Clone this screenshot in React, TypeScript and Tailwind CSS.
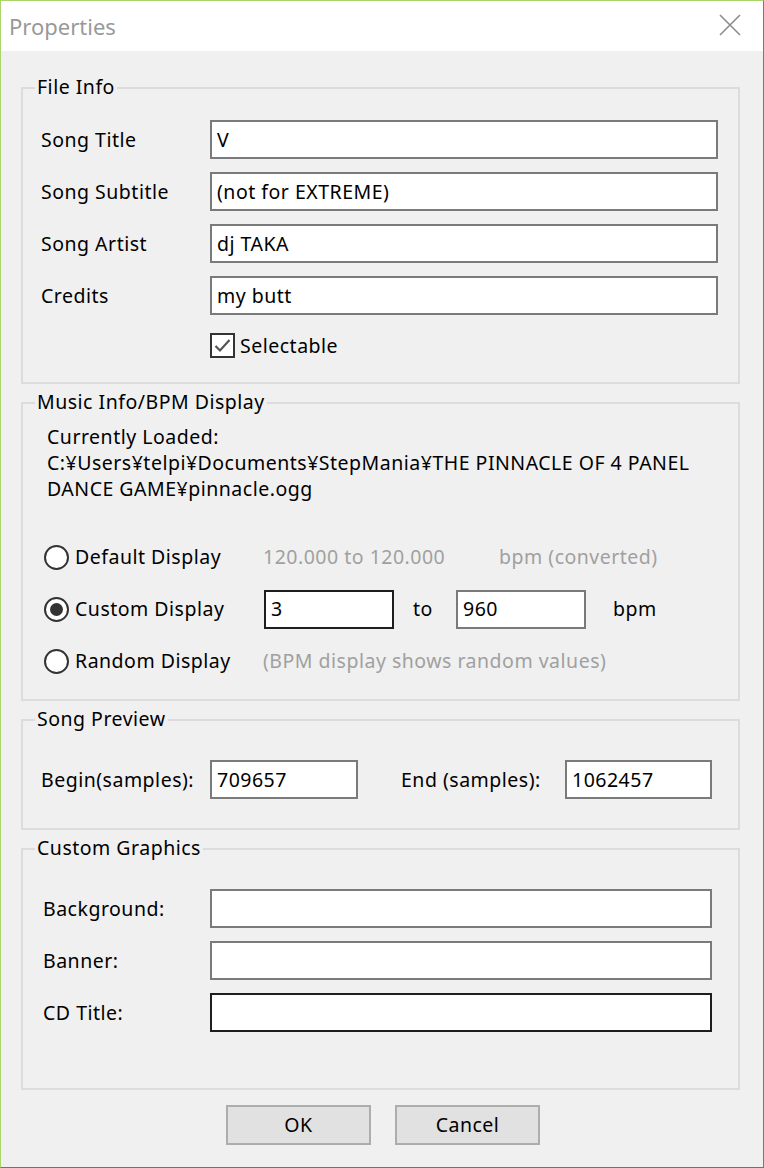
import React from "react";

const font = { fontFamily: '"Noto Sans", "Liberation Sans", sans-serif' };

function Group({ title, className, children }: { title: string; className?: string; children: React.ReactNode }) {
  return (
    <div className={"relative ml-[20px] w-[719px] border-2 border-[#dcdcdc] " + (className ?? "")}>
      <div className="absolute -top-[15px] left-[12px] bg-[#f0f0f0] px-[2px] text-[19.5px] leading-[26px] text-black">{title}</div>
      {children}
    </div>
  );
}

function TextBox({ value, className, dark }: { value?: string; className?: string; dark?: boolean }) {
  return (
    <div
      className={
        "flex h-[39px] items-center border-2 bg-white pl-[5px] text-[19.5px] text-black " +
        (dark ? "border-[#1e1e1e] " : "border-[#7a7a7a] ") +
        (className ?? "")
      }
    >
      {value}
    </div>
  );
}

function Radio({ checked }: { checked?: boolean }) {
  return (
    <div className="flex h-[25px] w-[25px] shrink-0 items-center justify-center rounded-full border-2 border-[#333333] bg-white">
      {checked && <div className="h-[13px] w-[13px] rounded-full bg-[#333333]" />}
    </div>
  );
}

export default function App() {
  return (
    <div style={font} className="h-[1168px] w-[764px] overflow-hidden border border-t-[#a8d66a] border-l-[#a8d66a] border-r-[#6e8a3e] border-b-[#6e7d3a] bg-[#f0f0f0] tracking-[0.5px]">
      {/* Title bar */}
      <div className="flex h-[50px] items-center justify-between bg-white pl-[8px] pr-[22px]">
        <span className="text-[22px] leading-[30px] tracking-normal text-[#999999]">Properties</span>
        <svg width="22" height="22" viewBox="0 0 22 22" className="mt-[-2px]">
          <path d="M1 1 L21 21 M21 1 L1 21" stroke="#8c8c8c" strokeWidth="1.6" fill="none" />
        </svg>
      </div>

      {/* File Info */}
      <Group title="File Info" className="mt-[36px] pb-[24px] pl-[18px] pr-[20px] pt-[31px]">
        <div className="flex flex-col gap-[13px]">
          {[
            ["Song Title", "V"],
            ["Song Subtitle", "(not for EXTREME)"],
            ["Song Artist", "dj TAKA"],
            ["Credits", "my butt"],
          ].map(([label, value]) => (
            <div key={label} className="flex items-center">
              <div className="w-[169px] text-[19.5px] text-black">{label}</div>
              <TextBox value={value} className="flex-1" />
            </div>
          ))}
          <div className="mt-[5px] flex h-[25px] items-center pl-[169px]">
            <div className="flex h-[25px] w-[25px] items-center justify-center border-2 border-[#333333] bg-white">
              <svg width="19" height="19" viewBox="0 0 19 19">
                <path d="M2.5 10 L7 14.5 L16.5 4" stroke="#555555" strokeWidth="2.2" fill="none" />
              </svg>
            </div>
            <span className="ml-[5px] text-[19.5px] leading-[25px] text-black">Selectable</span>
          </div>
        </div>
      </Group>

      {/* Music Info */}
      <Group title="Music Info/BPM Display" className="mt-[18px] pb-[18px] pl-[21px] pr-[20px] pt-[20px]">
        <div className="pl-[3px] text-[19.5px] leading-[26px] text-black">
          <div>Currently Loaded:</div>
          <div className="whitespace-nowrap">C:¥Users¥telpi¥Documents¥StepMania¥THE PINNACLE OF 4 PANEL</div>
          <div>DANCE GAME¥pinnacle.ogg</div>
        </div>
        <div className="mt-[35px] flex flex-col gap-[12px] text-[19.5px]">
          <div className="flex h-[40px] items-center">
            <div className="flex w-[219px] items-center">
              <Radio />
              <span className="ml-[6px] text-black">Default Display</span>
            </div>
            <span className="w-[236px] text-[#a0a0a0]">120.000 to 120.000</span>
            <span className="text-[#a0a0a0]">bpm (converted)</span>
          </div>
          <div className="flex h-[40px] items-center">
            <div className="flex w-[220px] items-center">
              <Radio checked />
              <span className="ml-[6px] text-black">Custom Display</span>
            </div>
            <TextBox value="3" dark className="w-[130px]" />
            <span className="w-[62px] pl-[19px] text-black">to</span>
            <TextBox value="960" className="w-[130px]" />
            <span className="pl-[27px] text-black">bpm</span>
          </div>
          <div className="flex h-[40px] items-center">
            <div className="flex w-[219px] items-center">
              <Radio />
              <span className="ml-[6px] text-black">Random Display</span>
            </div>
            <span className="text-[#a0a0a0]">(BPM display shows random values)</span>
          </div>
        </div>
      </Group>

      {/* Song Preview */}
      <Group title="Song Preview" className="mt-[18px] pb-[29px] pl-[18px] pt-[39px]">
        <div className="flex items-center text-[19.5px] text-black">
          <span className="w-[169px]">Begin(samples):</span>
          <TextBox value="709657" className="w-[148px]" />
          <span className="w-[207px] pl-[43px]">End (samples):</span>
          <TextBox value="1062457" className="w-[147px]" />
        </div>
      </Group>

      {/* Custom Graphics */}
      <Group title="Custom Graphics" className="mt-[18px] pb-[56px] pl-[20px] pt-[39px]">
        <div className="flex flex-col gap-[13px] text-[19.5px] text-black">
          {[
            ["Background:", false],
            ["Banner:", false],
            ["CD Title:", true],
          ].map(([label, dark]) => (
            <div key={label as string} className="flex items-center">
              <span className="w-[167px]">{label as string}</span>
              <TextBox dark={dark as boolean} className="w-[502px]" />
            </div>
          ))}
        </div>
      </Group>

      {/* Buttons */}
      <div className="mt-[15px] flex justify-center gap-[24px] pl-[2px]">
        <button className="h-[40px] w-[145px] border-2 border-[#adadad] bg-[#e1e1e1] text-[19.5px] text-black">OK</button>
        <button className="h-[40px] w-[145px] border-2 border-[#adadad] bg-[#e1e1e1] text-[19.5px] text-black">Cancel</button>
      </div>
    </div>
  );
}
